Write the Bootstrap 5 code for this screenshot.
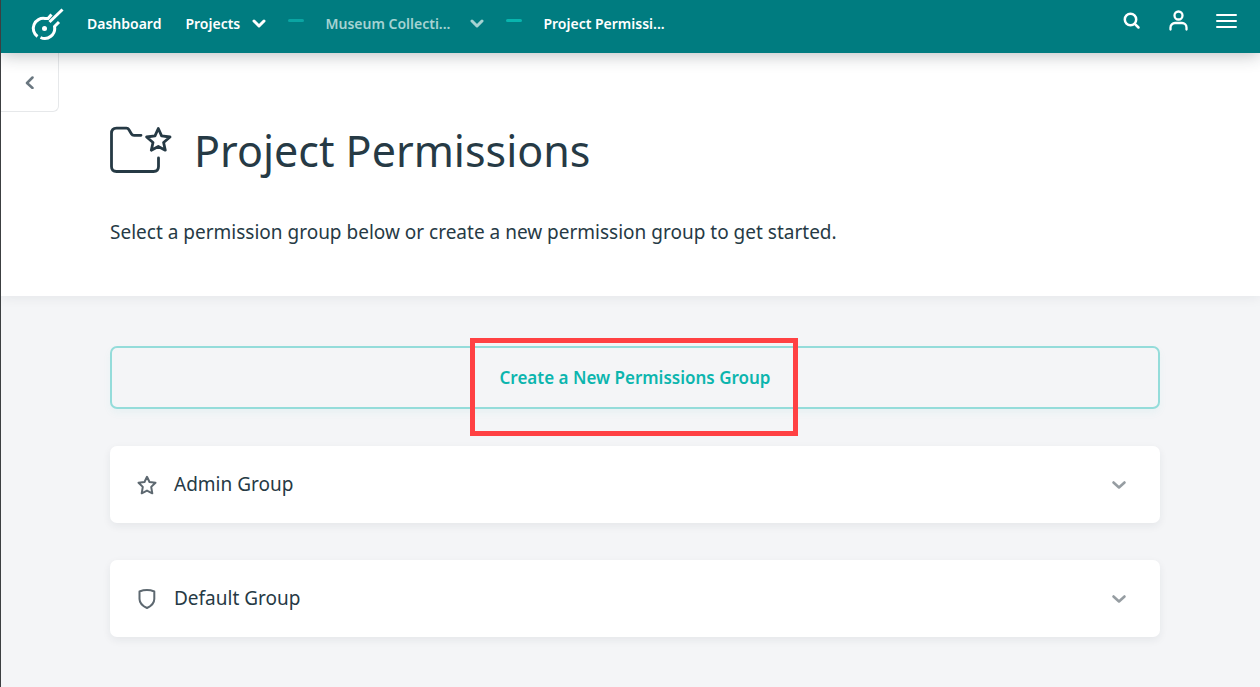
<!DOCTYPE html>
<html lang="en">
<head>
<meta charset="utf-8">
<meta name="viewport" content="width=device-width, initial-scale=1">
<title>Project Permissions</title>
<link href="https://cdn.jsdelivr.net/npm/bootstrap@5.3.0/dist/css/bootstrap.min.css" rel="stylesheet">
<style>
  body {
    font-family: "Noto Sans", "Open Sans", sans-serif;
    color: #263a45;
    background: #f4f5f7;
    border-left: 1px solid #3c3f41;
    min-height: 100vh;
  }
  svg { display: block; flex: none; fill: none; stroke: currentColor; stroke-linecap: round; stroke-linejoin: round; }

  .topbar { background: #007c80; min-height: 53px; padding: 0 23px 6px 30px; box-shadow: 0 2px 16px rgba(30, 40, 50, .3); z-index: 2; }
  .topbar a, .topbar button { color: #fff; font-size: 14px; font-weight: 600; line-height: 20px; text-decoration: none; }
  .topbar .muted { color: #a5d3d2; }
  .brand { margin-right: 23px; }
  .brand svg { stroke-linecap: butt; }
  .crumbs { gap: 21px; }
  .crumb-name { min-width: 58px; text-align: left; }
  .crumb-name.wide { min-width: 136px; }
  .dash { width: 16px; height: 3px; border-radius: 2px; background: #0aa5a3; margin-bottom: 6px; }
  .dash.bright { background: #08b5ae; }
  .tools { gap: 28px; padding-bottom: 6px; }

  .back { width: 58px; height: 59px; border: 1px solid #e6e8ea; border-width: 0 1px 1px 0; border-radius: 0 0 6px 0; color: #6a7780; background: #fff; }
  .hero { background: #fff; padding-bottom: 50px; box-shadow: 0 1px 12px rgba(30, 40, 50, .08); }
  .inset { padding-left: 109px; padding-right: 100px; }
  .title-row { gap: 20px; padding-top: 11px; margin-bottom: 39px; }
  .hero h1 { font-size: 43px; font-weight: 400; line-height: 56px; }
  .hero p { font-size: 19px; line-height: 28px; }

  .groups { gap: 37px; padding-top: 50px; padding-bottom: 50px; }
  .create { display: block; height: 63px; border: 2px solid #94dcda; border-radius: 7px; color: #0cb5ae; font-size: 17px; font-weight: 600; background: transparent; box-shadow: 0 4px 8px rgba(12, 181, 174, .05); }
  .callout { position: absolute; top: -8px; left: 50%; width: 328px; height: 98px; margin-left: -165px; border: 5px solid #ff4143; pointer-events: none; }
  .group-card { height: 77px; gap: 17px; border: 0; border-radius: 7px; padding: 0 33px 0 27px; font-size: 19px; color: #263a45; background: #fff; box-shadow: 0 3px 8px rgba(30, 40, 50, .07); }
  .group-icon { color: #5d6870; }
  .chev { color: #969da2; }

  @media (max-width: 767px) {
    .topbar { flex-wrap: wrap; }
    .inset { padding-left: 24px; padding-right: 24px; }
  }
</style>
</head>
<body>
<header class="topbar d-flex align-items-center position-relative">
  <a href="#" aria-label="Home" class="brand">
    <svg width="33" height="34" viewBox="0 0 33 34" stroke-width="3">
      <path d="M6.500 29.500A10 10 0 0 1 14 11.500H17L20.500 7.500"/>
      <path d="M18.500 15L31.500 2.500"/>
      <path d="M28 15L23.500 19.500A10 10 0 0 1 9.500 30.500"/>
      <circle cx="13.500" cy="21.500" r="2.500" fill="currentColor" stroke="none"/>
    </svg>
  </a>
  <a href="#" class="me-4">Dashboard</a>
  <nav class="crumbs d-flex align-items-center" aria-label="Breadcrumb">
    <button type="button" class="btn p-0 border-0 d-flex align-items-center gap-2">
      <span class="crumb-name">Projects</span>
      <svg width="16" height="10" viewBox="0 0 16 10" stroke-width="3"><path d="M3 2l5 5 5-5"/></svg>
    </button>
    <span class="dash"></span>
    <button type="button" class="btn p-0 border-0 muted d-flex align-items-center gap-2">
      <span class="crumb-name wide">Museum Collecti...</span>
      <svg width="16" height="10" viewBox="0 0 16 10" stroke-width="3"><path d="M3 2l5 5 5-5"/></svg>
    </button>
    <span class="dash bright"></span>
    <a href="#">Project Permissi...</a>
  </nav>
  <div class="tools d-flex align-items-center ms-auto">
    <button type="button" class="btn p-0 border-0" aria-label="Search">
      <svg width="18" height="18" viewBox="0 0 18 18" stroke-width="2.500"><circle cx="7.500" cy="7.500" r="5.700"/><path d="M11.800 11.800L15.500 15.500"/></svg>
    </button>
    <button type="button" class="btn p-0 border-0" aria-label="Account">
      <svg width="19" height="21" viewBox="0 0 19 21" stroke-width="2.300"><circle cx="9.500" cy="5.500" r="4"/><path d="M1.500 19.500V17.500A4.500 4.500 0 0 1 6 13H13A4.500 4.500 0 0 1 17.500 17.500V19.500"/></svg>
    </button>
    <button type="button" class="btn p-0 border-0" aria-label="Menu">
      <svg width="21" height="14" viewBox="0 0 21 14" stroke-width="2"><path d="M1 1H20M1 7H20M1 13H20"/></svg>
    </button>
  </div>
</header>
<main>
  <section class="hero">
    <button type="button" class="back d-flex align-items-center justify-content-center p-0" aria-label="Back">
      <svg width="10" height="14" viewBox="0 0 10 14" stroke-width="2.500"><path d="M7.500 2.500L2 8L7.500 13"/></svg>
    </button>
    <div class="inset">
      <div class="title-row d-flex align-items-center">
        <svg width="64" height="52" viewBox="6 5 64 52" stroke-width="2.800">
          <path d="M37 15.300H30Q28.300 15.300 27.500 14L24.800 9.500Q24 8.200 22.500 8.200H12.500Q7.500 8.200 7.500 13.500V46.500Q7.500 51.500 12.500 51.500H49.500Q54.500 51.500 54.500 46.500V38"/>
          <path d="M54.300 8.500L57.600 15.800L66 17L59.600 22.500L61.300 30.200L54.300 26.500L47.300 30.200L49 22.500L42.600 17L51 15.800Z"/>
        </svg>
        <h1 class="mb-0">Project Permissions</h1>
      </div>
      <p class="mb-0">Select a permission group below or create a new permission group to get started.</p>
    </div>
  </section>
  <section class="groups inset d-flex flex-column">
    <div class="position-relative">
      <button type="button" class="create w-100">Create a New Permissions Group</button>
      <div class="callout"></div>
    </div>
    <button type="button" class="group-card w-100 d-flex align-items-center">
      <svg class="group-icon" width="20" height="20" viewBox="0 0 20 20" stroke-width="2"><path d="M10 1.800L12.500 7L18.500 7.800L14.200 11.900L15.300 18.300L10 15.600L4.700 18.300L5.800 11.900L1.500 7.800L7.500 7Z"/></svg>
      <span>Admin Group</span>
      <svg class="chev ms-auto" width="16" height="10" viewBox="0 0 16 10" stroke-width="2.600"><path d="M2.500 2.500L8 7.500L13.500 2.500"/></svg>
    </button>
    <button type="button" class="group-card w-100 d-flex align-items-center">
      <svg class="group-icon" width="20" height="20" viewBox="0 0 20 20" stroke-width="2"><path d="M2.500 2.500Q10 -.3 17.300 2.500V10Q17.300 15.500 10 19Q2.500 15.500 2.500 10Z"/></svg>
      <span>Default Group</span>
      <svg class="chev ms-auto" width="16" height="10" viewBox="0 0 16 10" stroke-width="2.600"><path d="M2.500 2.500L8 7.500L13.500 2.500"/></svg>
    </button>
  </section>
</main>
<script src="https://cdn.jsdelivr.net/npm/bootstrap@5.3.0/dist/js/bootstrap.bundle.min.js"></script>
</body>
</html>
